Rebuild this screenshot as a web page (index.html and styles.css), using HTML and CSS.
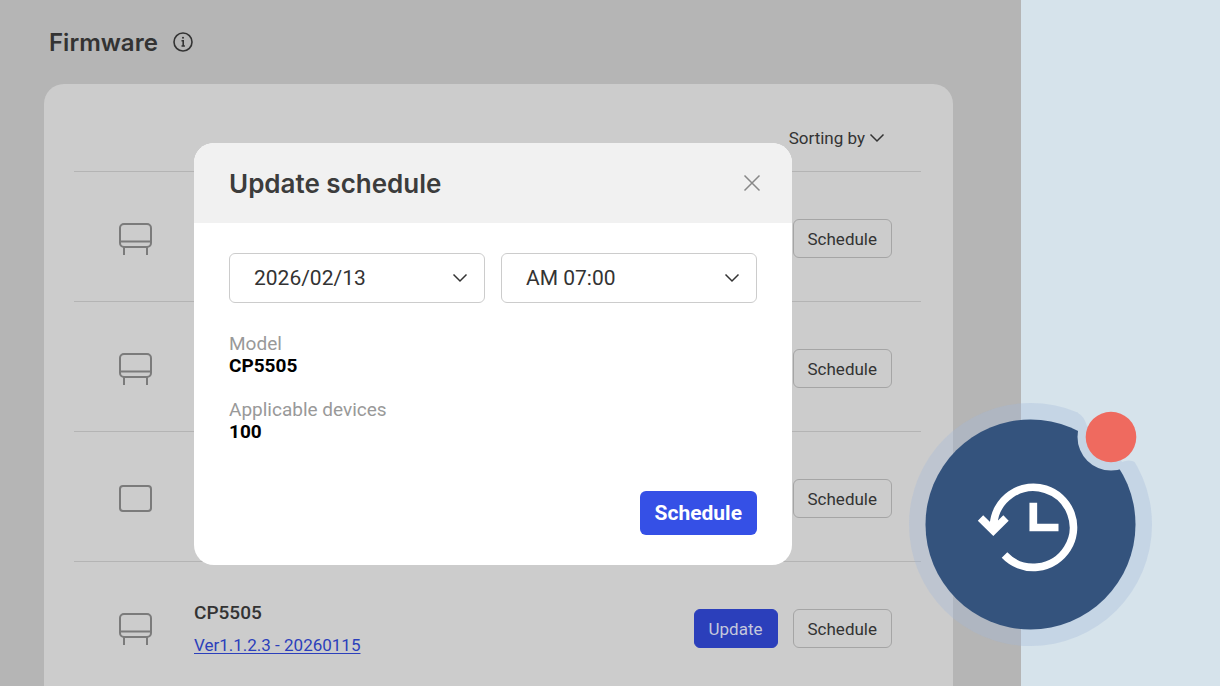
FILE: index.html
```html
<!DOCTYPE html>
<html lang="en">
<head>
<meta charset="utf-8">
<meta name="viewport" content="width=device-width, initial-scale=1">
<title>Firmware</title>
<link rel="stylesheet" href="styles.css">
</head>
<body>
<svg class="sprite" aria-hidden="true">
  <symbol id="chevron" viewBox="0 0 16 10"><path d="M1.5 1.5 8 8l6.5-6.5"/></symbol>
  <symbol id="stand" viewBox="0 0 34 34">
    <rect x="2" y="2" width="31" height="23" rx="4"/>
    <path d="M2 19.5h31M6 25v8M29 25v8"/>
  </symbol>
  <symbol id="panel" viewBox="0 0 34 34"><rect x="2" y="4" width="31" height="25" rx="3"/></symbol>
</svg>
<main class="app">
  <header class="page-head">
    <h1 class="page-title">Firmware</h1>
    <button class="icon-btn" type="button" aria-label="Information">
      <svg class="info" viewBox="0 0 22 22"><circle cx="11" cy="11" r="9"/><path d="M9.5 9.7h1.7v5M9.5 15h3.4"/><circle class="dot" cx="11" cy="6.8" r="1"/></svg>
    </button>
  </header>
  <section class="card">
    <div class="toolbar">
      <button class="sort" type="button">Sorting by <svg class="chevron"><use href="#chevron"/></svg></button>
    </div>
    <ul class="rows">
      <li class="row"><svg class="device"><use href="#stand"/></svg><div class="info-col"></div><button class="btn" type="button">Schedule</button></li>
      <li class="row"><svg class="device"><use href="#stand"/></svg><div class="info-col"></div><button class="btn" type="button">Schedule</button></li>
      <li class="row"><svg class="device"><use href="#panel"/></svg><div class="info-col"></div><button class="btn" type="button">Schedule</button></li>
      <li class="row"><svg class="device"><use href="#stand"/></svg>
        <div class="info-col"><strong class="model">CP5505</strong><a class="version" href="#">Ver1.1.2.3 - 20260115</a></div>
        <button class="btn btn-update" type="button">Update</button><button class="btn" type="button">Schedule</button></li>
    </ul>
  </section>
</main>
<form class="modal" role="dialog" aria-labelledby="modal-title">
  <header class="modal-head">
    <h2 class="modal-title" id="modal-title">Update schedule</h2>
    <button class="icon-btn" type="button" aria-label="Close">
      <svg class="close" viewBox="0 0 18 18"><path d="m1.5 1.5 15 15m0-15-15 15"/></svg>
    </button>
  </header>
  <div class="modal-body">
    <div class="fields">
      <div class="field"><select class="select" aria-label="Date"><option>2026/02/13</option></select><svg class="chevron field-chevron"><use href="#chevron"/></svg></div>
      <div class="field"><select class="select" aria-label="Time"><option>AM 07:00</option></select><svg class="chevron field-chevron"><use href="#chevron"/></svg></div>
    </div>
    <dl class="facts">
      <div><dt>Model</dt><dd>CP5505</dd></div>
      <div><dt>Applicable devices</dt><dd>100</dd></div>
    </dl>
    <button class="submit" type="button">Schedule</button>
  </div>
</form>
<svg class="badge" viewBox="0 0 244 244" role="img" aria-label="Scheduled update">
  <mask id="notch"><rect width="244" height="244" fill="#fff"/><circle cx="202" cy="34" r="33.5" fill="#000"/></mask>
  <mask id="gap"><rect width="244" height="244" fill="#fff"/><path fill="#000" d="M169 0v10q6 3 9 13l24 11 11 25q7-3 13 0l18-19V0z"/></mask>
  <circle class="halo" cx="121.5" cy="121.5" r="121.5" mask="url(#gap)"/>
  <circle class="disc" cx="121.5" cy="121.5" r="105" mask="url(#notch)"/>
  <circle class="alert" cx="202" cy="34" r="25.3"/>
  <path class="clock" d="M84.5 126v-4A40 40 0 1 1 95.5 152M71.5 115l12.8 12.5L97 115M124.3 99.7v24.8h25.2"/>
</svg>
</body>
</html>
```
FILE: styles.css
```css
* { box-sizing: border-box; }
body {
  margin: 0;
  min-height: 100vh;
  display: flex;
  position: relative;
  overflow: hidden;
  background: #d6e3eb;
  font-family: Roboto, "Liberation Sans", sans-serif;
  color: #333;
}
button, select { font: inherit; color: inherit; }
button { cursor: pointer; }
svg { fill: none; stroke: currentColor; display: block; flex: none; }
.sprite { position: absolute; width: 0; height: 0; }

.app {
  flex: 1;
  height: 100vh;
  margin-right: 199px;
  padding: 24px 68px 0 44px;
  background: #b5b5b5;
  display: flex;
  flex-direction: column;
}
.page-head {
  display: flex;
  align-items: center;
  gap: 14px;
  flex: none;
  height: 36px;
  margin: 0 5px 24px;
}
.page-title, .modal-title {
  margin: 0;
  font-family: Inter, "Open Sans", sans-serif;
  font-weight: 600;
}
.page-title { font-size: 24px; }
.icon-btn { padding: 0; border: 0; background: none; }
.info { width: 22px; height: 22px; stroke-width: 1.6; }
.info .dot { fill: currentColor; stroke: none; }

.card {
  flex: 1;
  min-height: 0;
  padding: 0 32px 0 30px;
  border-radius: 20px 20px 0 0;
  background: #ccc;
}
.toolbar {
  display: flex;
  justify-content: flex-end;
  align-items: flex-end;
  height: 87px;
  padding: 0 36px 21px;
}
.sort {
  display: flex;
  align-items: center;
  gap: 4px;
  padding: 0;
  border: 0;
  background: none;
  font-size: 17px;
  line-height: 24px;
}
.chevron { width: 16px; height: 10px; stroke-width: 1.5; }
.rows { margin: 0; padding: 0; list-style: none; }
.row {
  display: flex;
  align-items: center;
  height: 130px;
  padding: 4px 29px 0 44px;
  border-top: 1px solid #b4b4b4;
}
.device { width: 34px; height: 34px; stroke: #7b7b7b; stroke-width: 2; }
.info-col {
  flex: 1;
  display: flex;
  flex-direction: column;
  align-items: flex-start;
  gap: 8px;
  padding-left: 42px;
}
.model { font-size: 19px; line-height: 24px; font-weight: 500; }
.version { font-size: 17px; line-height: 24px; color: #2b3fbb; text-underline-offset: 2px; }
.btn {
  height: 39px;
  padding: 0 14px;
  border: 1px solid #a5a5a5;
  border-radius: 6px;
  background: none;
  font-size: 17px;
}
.btn-update { margin-right: 15px; border-color: #2b3fbb; background: #2b3fbb; color: #c4c8dc; }

.modal {
  position: absolute;
  top: 143px;
  left: 194px;
  width: 598px;
  border-radius: 20px;
  overflow: hidden;
  background: #fff;
}
.modal-head {
  display: flex;
  align-items: center;
  justify-content: space-between;
  height: 80px;
  padding: 0 31px 0 35px;
  background: #f1f1f1;
}
.modal-title { font-size: 26px; color: #3c3c3c; }
.close { width: 18px; height: 18px; color: #888; stroke-width: 1.5; }
.modal-body {
  display: flex;
  flex-direction: column;
  padding: 30px 35px;
}
.fields { display: flex; gap: 16px; }
.field { flex: 1; position: relative; }
.select {
  appearance: none;
  width: 100%;
  height: 50px;
  padding: 0 24px;
  border: 1px solid #ccc;
  border-radius: 6px;
  background: #fff;
  font-size: 21px;
}
.field-chevron { position: absolute; top: 20px; right: 17px; pointer-events: none; }
.facts {
  display: grid;
  gap: 22px;
  margin: 30px 0 48px;
  font-size: 19px;
  line-height: 22px;
}
.facts dt { color: #999; }
.facts dd { margin: 0; color: #000; font-weight: 700; }
.submit {
  align-self: flex-end;
  height: 44px;
  padding: 0 15px;
  border: 0;
  border-radius: 6px;
  background: #3550e6;
  color: #fff;
  font-size: 21px;
  font-weight: 700;
}

.badge {
  position: absolute;
  top: 403px;
  right: 67px;
  width: 244px;
  height: 244px;
  stroke: none;
}
.halo { fill: #a3b9da; fill-opacity: .32; }
.disc { fill: #34537d; }
.alert { fill: #ef6a5f; }
.clock { stroke: #fff; stroke-width: 7.7; }
```
